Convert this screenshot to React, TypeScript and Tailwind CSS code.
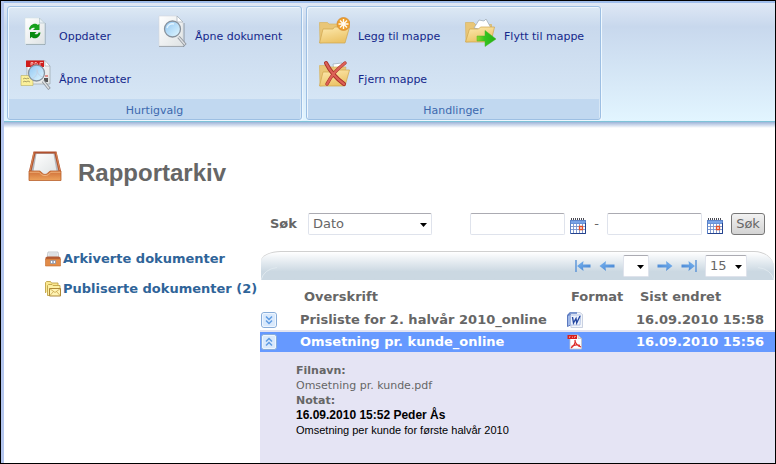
import type { ReactNode } from "react";

function Gradients() {
  return (
    <svg width="0" height="0" className="absolute" aria-hidden="true">
      <defs>
        <linearGradient id="paper" x1="0" y1="0" x2="1" y2="1">
          <stop offset="0" stopColor="#ffffff" />
          <stop offset="1" stopColor="#dfe3e4" />
        </linearGradient>
        <linearGradient id="folder" x1="0" y1="0" x2="0.4" y2="1">
          <stop offset="0" stopColor="#fdeab0" />
          <stop offset="1" stopColor="#ecc468" />
        </linearGradient>
        <linearGradient id="lens" x1="0" y1="0" x2="1" y2="1">
          <stop offset="0" stopColor="#8fc6f2" />
          <stop offset="1" stopColor="#e2f7ff" />
        </linearGradient>
        <linearGradient id="go" x1="0" y1="0" x2="1" y2="0">
          <stop offset="0" stopColor="#8fd42a" />
          <stop offset="0.4" stopColor="#35c51f" />
          <stop offset="1" stopColor="#22b014" />
        </linearGradient>
        <linearGradient id="arrow" x1="0" y1="0" x2="1" y2="1">
          <stop offset="0" stopColor="#7db6f0" />
          <stop offset="1" stopColor="#3f7fd0" />
        </linearGradient>
        <linearGradient id="wood" x1="0" y1="0" x2="0" y2="1">
          <stop offset="0" stopColor="#cf6f38" />
          <stop offset="1" stopColor="#eda35c" />
        </linearGradient>
      </defs>
    </svg>
  );
}

function RefreshIcon() {
  return (
    <svg width="32" height="32" viewBox="0 0 32 32" aria-hidden="true">
      <path d="M7 29.500h19V8" fill="none" stroke="#8f9ea8" />
      <path d="M6 3h14.500l5 5v21H6z" fill="url(#paper)" stroke="#d5e2e4" strokeWidth=".6" />
      <path d="M20.500 3v5h5z" fill="#e8f1f6" stroke="#a8bcc8" strokeWidth=".6" />
      <path d="M10 14.500c.5-5 6-7.500 9-4.500l1.500-1.500V15H14l2-2c-2.500-1-4 .2-4 1.500z" fill="#16a01c" />
      <path d="M21.500 17.500c-.5 5-6 7.500-9 4.500L11 23.500V17h6.500l-2 2c2.500 1 4-.2 4-1.500z" fill="#078a10" />
    </svg>
  );
}

function OpenDocumentIcon() {
  return (
    <svg width="32" height="32" viewBox="0 0 32 32" aria-hidden="true">
      <path d="M4 31.500h25V8" fill="none" stroke="#8f989f" />
      <path d="M4 1h18l6 6v24H4z" fill="url(#paper)" stroke="#d3d7db" strokeWidth=".6" />
      <path d="M22 1v6h6z" fill="#fff" stroke="#9fabb5" strokeWidth=".7" />
      <path d="M23.500 22l7 8" stroke="#8d9299" strokeWidth="3" />
      <path d="M23.500 22l6.500 7.500" stroke="#dcdfe2" strokeWidth="1.500" />
      <circle cx="17.500" cy="14" r="8" fill="url(#lens)" stroke="#87919c" strokeWidth="1.300" />
      <path d="M12 13c1-3.500 4-5 7-4" fill="none" stroke="#e3f4ff" strokeWidth="1.500" />
    </svg>
  );
}

function OpenNotesIcon() {
  return (
    <svg width="32" height="32" viewBox="0 0 32 32" aria-hidden="true">
      <path d="M8 3h18l5 5v18H8z" fill="url(#paper)" stroke="#929aa0" strokeWidth=".6" />
      <path d="M26 2.500v5.500h5z" fill="#fff" stroke="#a0a6ac" strokeWidth=".6" />
      <path d="M7 2.500h18V9H7z" fill="#cf1d1b" />
      <path d="M12 7.500v-3h2v1.500h-2M16 4.500h1.500l1 1.500-1 1.500H16zM24 4.500h-3v3" fill="none" stroke="#f7b8b2" strokeWidth=".9" />
      <path d="M25 20h4v4h-4z" fill="#575757" />
      <path d="M26 18h3" stroke="#d43c31" />
      <path d="M2 17.500h12v10H2z" fill="#fbf09a" stroke="#b9ad61" strokeWidth=".6" />
      <path d="M4 21l2-1 1 1 2-1 1 1M4 24l2-1 1 1 2-1 2 1" fill="none" stroke="#99915a" strokeWidth=".8" />
      <path d="M24 23l6.500 8" stroke="#8d9299" strokeWidth="3" />
      <path d="M24 23l6 7.500" stroke="#dfe2e4" strokeWidth="1.400" />
      <circle cx="17.500" cy="15" r="8" fill="url(#lens)" stroke="#87919c" strokeWidth="1.300" />
      <path d="M18 11c1 4-1 8-5 10M18 11c0 4 2 7 6 8" fill="none" stroke="#c3d2e6" />
    </svg>
  );
}

function FolderShape() {
  return (
    <>
      <path d="M1.500 7.500h8l1.500 1.500h17l-2 15L2 28z" fill="#e9c677" stroke="#d7b563" strokeWidth=".7" />
      <path d="M1.500 28l3.500-14h10l1.500-2h15L27 28z" fill="url(#folder)" stroke="#cfa54c" strokeWidth=".7" />
    </>
  );
}

function AddFolderIcon() {
  return (
    <svg width="32" height="32" viewBox="0 0 32 32" aria-hidden="true">
      <FolderShape />
      <circle cx="25.500" cy="9" r="6.500" fill="#ee9f2b" stroke="#d38a35" strokeWidth=".7" />
      <path d="M25.500 4v10M20.500 9h10M22 5.500l7 7M29 5.500l-7 7" stroke="#fffaf0" strokeWidth="1.400" />
    </svg>
  );
}

function RemoveFolderIcon() {
  return (
    <svg width="32" height="32" viewBox="0 0 32 32" aria-hidden="true">
      <path d="M15 6l9-1 2 8H16z" fill="#fff" stroke="#9aa8b4" strokeWidth=".7" />
      <FolderShape />
      <path d="M8 5c4 8 11 16 18 21" fill="none" stroke="#a72f2a" strokeWidth="4" strokeLinecap="round" />
      <path d="M27 5C19 11 13 18 9 26" fill="none" stroke="#a72f2a" strokeWidth="3.400" strokeLinecap="round" />
      <path d="M8 5c4 8 11 16 18 21M27 5C19 11 13 18 9 26" fill="none" stroke="#dc6156" strokeWidth="2.200" strokeLinecap="round" />
    </svg>
  );
}

function MoveFolderIcon() {
  return (
    <svg width="32" height="32" viewBox="0 0 32 32" aria-hidden="true">
      <path d="M1.500 7.500h8l2 2h16v15L2 27z" fill="#e9c677" stroke="#d7b563" strokeWidth=".7" />
      <path d="M10 13l5-8 5 1 2-2 5 9-3 3z" fill="#fff" stroke="#99a6b0" strokeWidth=".7" />
      <path d="M1.500 27l4-13h9l2-2h14L27 27z" fill="url(#folder)" stroke="#cfa54c" strokeWidth=".7" />
      <path d="M13 21h8v-5.500L32 24l-11 7.500V26h-8z" fill="url(#go)" stroke="#45b42b" strokeWidth=".5" />
    </svg>
  );
}

function TrayIcon() {
  return (
    <svg width="34" height="32" viewBox="0 0 34 32" aria-hidden="true">
      <path d="M5.500 1.500h23L33 21H1z" fill="#b0502e" />
      <path d="M7.500 3.500h19L30.500 21h-27z" fill="#b4b6ba" />
      <path d="M8.500 4h17L29 24H5z" fill="url(#paper)" />
      <path d="M6 2.500L2.200 20.500M28 2.500L31.800 20.500" stroke="#e39a62" strokeWidth=".8" />
      <path d="M1 21h10.500c1.500 0 3 3.500 5.500 3.500s4-3.500 5.500-3.500H33v9.500H1z" fill="url(#wood)" stroke="#b9602c" strokeWidth=".8" />
      <path d="M1.500 22.200h9.500c1.500 1.800 3.200 3.400 6 3.400s4.500-1.600 6-3.400h9.500" fill="none" stroke="#f0b27c" />
    </svg>
  );
}

function ArchiveBoxIcon() {
  return (
    <svg width="16" height="16" viewBox="0 0 16 16" aria-hidden="true" className="shrink-0">
      <path d="M3 1h10l1 6H2z" fill="#eef0f2" stroke="#b9bec3" strokeWidth=".8" />
      <path d="M4 3h8M3.500 5h9" stroke="#c2c8cd" strokeWidth=".8" />
      <path d="M.5 6.500l2-1h11l2 1v2H.5z" fill="#b25a34" />
      <path d="M.5 8h15v7H.5z" fill="#e18b48" stroke="#c36d30" strokeWidth=".6" />
      <path d="M5.500 9.500h5v3h-5z" fill="#fff" stroke="#7b8ba8" strokeWidth=".7" />
      <path d="M7 11h2" stroke="#536b98" />
    </svg>
  );
}

function MailFolderIcon() {
  return (
    <svg width="16" height="16" viewBox="0 0 16 16" aria-hidden="true" className="shrink-0">
      <path d="M.5 12V1.500l1-1h4l1 1.500h6.500v3" fill="#fbe88f" stroke="#c0a348" strokeWidth=".9" />
      <path d="M2.500 14.500v-10l1-1h3.500l1 1h7v10z" fill="#fdf0a4" stroke="#c0a348" strokeWidth=".9" />
      <path d="M4.500 7.500h11v7.500h-11z" fill="#fff4b4" stroke="#a67d28" strokeWidth=".9" />
      <path d="M4.500 7.500l5.500 4 5.500-4M4.500 15l4-4.500M15.500 15l-4-4.500" fill="none" stroke="#c19a40" strokeWidth=".7" />
    </svg>
  );
}

function CalendarIcon() {
  return (
    <svg width="16" height="16" viewBox="0 0 16 16" aria-hidden="true">
      <path d="M0 2h16v14H0z" fill="#5b82c8" />
      <path d="M1 6h14v9H1z" fill="#fff" />
      <path d="M1 3h14v2.500H1z" fill="#78a3e6" />
      <path d="M1 8.500h14M1 11.500h14M3.500 6v9M6.500 6v9M9.500 6v9M12.500 6v9" stroke="#7693cd" strokeWidth=".9" />
      <path d="M1.500 0v2M3.500 0v2M5.500 0v2M7.500 0v2M9.500 0v2M11.500 0v2M13.500 0v2" stroke="#4c4c55" />
      <path d="M9.500 8.500h3v3h-3z" fill="#fff" stroke="#e4512a" strokeWidth="1.300" />
      <path d="M15.500 5v10.500H1" fill="none" stroke="#25428c" />
    </svg>
  );
}

function WordIcon() {
  return (
    <svg width="16" height="16" viewBox="0 0 16 16" aria-hidden="true">
      <path d="M3 .5h10l2.500 2V15.500H4z" fill="#f3f6fb" stroke="#b4bfd4" strokeWidth=".7" />
      <path d="M.5 3.500L3 1h7" fill="none" stroke="#5f80c6" strokeWidth="1.300" />
      <path d="M.5 3.500L3.500 2.500V13L.5 14.500z" fill="#9fb8e8" stroke="#3f60b0" strokeWidth=".8" />
      <path d="M3.500 3h10l-.5 10H3.500z" fill="#eef3fd" stroke="#a3b6de" strokeWidth=".8" />
      <path d="M5.500 5l1 6L9 6.500l.7 4.500L13 4" fill="none" stroke="#2547a0" strokeWidth="1.400" />
    </svg>
  );
}

function PdfIcon() {
  return (
    <svg width="16" height="16" viewBox="0 0 16 16" aria-hidden="true">
      <path d="M3 1h8l3.500 3.500V15H3z" fill="#fff" stroke="#c3c3c8" strokeWidth=".8" />
      <path d="M11 1v3.500h3.500z" fill="#e4e4e8" stroke="#aaa" strokeWidth=".5" />
      <path d="M.5 1H10v4H.5z" fill="#d9201d" />
      <path d="M2.500 4V2.500h1M5.500 4V2.500M7.500 4V2.500H9" fill="none" stroke="#f6b5b0" strokeWidth=".7" />
      <path d="M8 6c.8 3-1.500 6.500-4 8M8 6c-.2 3 2.500 6 6 7M4.500 12.500c2-1.500 5-2.200 8.500-1.200" fill="none" stroke="#dc2c28" strokeWidth="1.200" />
    </svg>
  );
}

function ChevronBox({ up }: { up?: boolean }) {
  return (
    <svg width="16" height="16" viewBox="0 0 16 16" aria-hidden="true">
      <rect x=".5" y=".5" width="15" height="15" rx="2.500" fill="#d9e9fc" stroke="#88acd8" />
      <rect x="1.500" y="1.500" width="13" height="13" rx="1.500" fill="none" stroke="#eef6ff" />
      <path
        d={up ? "M5 7.500l3-3 3 3M5 11.500l3-3 3 3" : "M5 4.500l3 3 3-3M5 8.500l3 3 3-3"}
        fill="none"
        stroke="#5f9be2"
        strokeWidth="1.500"
      />
    </svg>
  );
}

function PagerArrow({ bar, flip }: { bar?: boolean; flip?: boolean }) {
  return (
    <svg width="16" height="12" viewBox="0 0 16 12" aria-hidden="true" className={flip ? "-scale-x-100" : ""}>
      {bar && <path d="M1 0v12" stroke="#4c8bd6" strokeWidth="1.300" />}
      <path d={bar ? "M2 6l6.500-5L8 4.500h7.500v3H8l.5 3.500z" : "M.5 6L7 1l-.5 3.500h9v3h-9L7 11z"} fill="url(#arrow)" />
    </svg>
  );
}

function RibbonButton({ icon, label }: { icon: ReactNode; label: string }) {
  return (
    <button type="button" className="flex h-8 items-center gap-2 whitespace-nowrap text-left text-[#15288b]">
      {icon}
      <span className="pt-3">{label}</span>
    </button>
  );
}

function RibbonPanel({ title, children }: { title: string; children: ReactNode }) {
  return (
    <section className="flex w-[295px] flex-col rounded-[3px] border border-[#9dbfe3] bg-linear-to-b from-[#dde9f5] from-0% via-[#c9d9ed] via-18% to-[#d9e9f7] shadow-[inset_1px_1px_0_#eef6fd,1px_1px_0_#eef8ff]">
      <div className="flex flex-1 flex-col px-[11px] pt-2">{children}</div>
      <h2 className="mx-px h-5 bg-[#c1d8f0] text-center leading-6 text-[#3c68ae]">{title}</h2>
    </section>
  );
}

type SelectProps = { id?: string; label?: string; options: string[]; className: string };

function Select({ id, label, options, className }: SelectProps) {
  return (
    <span className={`relative inline-block ${className}`}>
      <select
        id={id}
        aria-label={label}
        className="block h-[22px] w-full appearance-none rounded-[2px] border border-[#dfe3ec] border-t-[#ababb2] bg-white pl-1 text-[13px] leading-5 text-[#666]"
      >
        {options.map((o) => (
          <option key={o}>{o}</option>
        ))}
      </select>
      <svg width="7" height="4" viewBox="0 0 7 4" className="pointer-events-none absolute right-[5px] top-[10px]" aria-hidden="true">
        <path d="M0 0h7L3.500 4z" fill="#000" />
      </svg>
    </span>
  );
}

function DateField({ label }: { label: string }) {
  return (
    <span className="flex items-center gap-[5px]">
      <input
        type="text"
        aria-label={label}
        className="h-[22px] w-[95px] rounded-[2px] border border-[#dfe3ec] border-t-[#ababb2] bg-white px-1 text-[13px]"
      />
      <button type="button" aria-label={`${label} kalender`} className="pt-1">
        <CalendarIcon />
      </button>
    </span>
  );
}

function PagerButton({ label, bar, flip }: { label: string; bar?: boolean; flip?: boolean }) {
  return (
    <button type="button" aria-label={label}>
      <PagerArrow bar={bar} flip={flip} />
    </button>
  );
}

function SideLink({ icon, children }: { icon: ReactNode; children: ReactNode }) {
  return (
    <a href="#" className="flex h-[30px] items-center gap-[2px] whitespace-nowrap text-[13px] font-bold text-[#2f6499]">
      {icon}
      {children}
    </a>
  );
}

export default function App() {
  return (
    <div className="flex min-h-screen flex-col border border-black bg-white font-['DejaVu_Sans',Verdana,sans-serif] text-[11px] text-[#666]">
      <Gradients />
      <div className="flex flex-1 flex-col border-l-[3px] border-[#b4c6ee]">
        <header className="border-b border-[#7fc3d8] border-t-2 border-t-[#9fbdeb] bg-linear-to-b from-[#dfe8f5] via-[#c8d8ed] via-20% to-[#e2f5ff]">
          <div className="flex h-[118px] gap-1 px-[3px] pt-[3px] pb-px">
            <RibbonPanel title="Hurtigvalg">
              <div className="grid grid-cols-[136px_1fr] gap-y-[11px]">
                <RibbonButton icon={<RefreshIcon />} label="Oppdater" />
                <RibbonButton icon={<OpenDocumentIcon />} label="Åpne dokument" />
                <RibbonButton icon={<OpenNotesIcon />} label="Åpne notater" />
              </div>
            </RibbonPanel>
            <RibbonPanel title="Handlinger">
              <div className="grid grid-cols-[146px_1fr] gap-y-[11px]">
                <RibbonButton icon={<AddFolderIcon />} label="Legg til mappe" />
                <RibbonButton icon={<MoveFolderIcon />} label="Flytt til mappe" />
                <RibbonButton icon={<RemoveFolderIcon />} label="Fjern mappe" />
              </div>
            </RibbonPanel>
          </div>
        </header>
        <div className="h-[6px] bg-linear-to-b from-[#9db4d8] to-white" />

        <div className="flex items-start gap-4 pl-6 pt-[22px]">
          <TrayIcon />
          <h1 className="pt-[7px] font-['Liberation_Sans',Arial,sans-serif] text-[24px] font-bold leading-8">Rapportarkiv</h1>
        </div>

        <div className="flex flex-1 pt-1">
          <nav className="w-64 shrink-0 pl-[41px] pt-[51px]">
            <SideLink icon={<ArchiveBoxIcon />}>Arkiverte dokumenter</SideLink>
            <SideLink icon={<MailFolderIcon />}>Publiserte dokumenter (2)</SideLink>
          </nav>

          <main className="flex min-w-0 flex-1 flex-col pt-5">
            <form className="flex items-center pl-[10px] text-[13px]" onSubmit={(e) => e.preventDefault()}>
              <label htmlFor="field" className="w-[38px] font-bold">
                Søk
              </label>
              <Select id="field" options={["Dato"]} className="w-[124px]" />
              <div className="ml-auto mr-[10px] flex items-center gap-2">
                <DateField label="Fra dato" />
                <span>-</span>
                <DateField label="Til dato" />
                <button
                  type="submit"
                  className="h-[22px] w-[34px] rounded-[3px] border border-[#777] bg-linear-to-b from-[#f2f2f2] to-[#d3d3d3] text-[13px] leading-5"
                >
                  Søk
                </button>
              </div>
            </form>

            <div className="relative mx-px mt-4 flex h-[29px] items-center justify-end gap-2 overflow-hidden rounded-tl-[20px_10px] rounded-tr-[20px_16px] border-t border-[#d0d0d0] bg-linear-to-b from-white to-[#cbd8e2] to-70% pr-[27px]">
              <svg width="16" height="13" viewBox="0 0 16 13" className="absolute bottom-0 left-0" aria-hidden="true">
                <path d="M0 13Q3 2 16 .5" fill="none" stroke="#dfe8ee" />
              </svg>
              <svg width="16" height="13" viewBox="0 0 16 13" className="absolute bottom-0 right-0" aria-hidden="true">
                <path d="M16 13Q13 2 0 .5" fill="none" stroke="#dfe8ee" />
              </svg>
              <PagerButton label="Første" bar />
              <PagerButton label="Forrige" />
              <Select label="Side" options={[""]} className="w-[26px]" />
              <PagerButton label="Neste" flip />
              <PagerButton label="Siste" bar flip />
              <Select label="Antall per side" options={["15"]} className="w-[42px]" />
            </div>

            <table className="w-full table-fixed border-collapse text-left text-[13px]">
              <colgroup>
                <col className="w-10" />
                <col />
                <col className="w-[69px]" />
                <col className="w-[139px]" />
              </colgroup>
              <thead>
                <tr className="h-[29px]">
                  <th />
                  <th className="pl-1 pt-1">Overskrift</th>
                  <th className="pl-1 pt-1">Format</th>
                  <th className="pl-1 pt-1">Sist endret</th>
                </tr>
              </thead>
              <tbody className="font-bold">
                <tr className="h-[22px] border-b-2 border-[#e4e4f0]">
                  <td className="p-0 pl-px">
                    <button type="button" aria-label="Vis detaljer" className="block">
                      <ChevronBox />
                    </button>
                  </td>
                  <td className="whitespace-nowrap p-0">Prisliste for 2. halvår 2010_online</td>
                  <td className="p-0">
                    <WordIcon />
                  </td>
                  <td className="whitespace-nowrap p-0">16.09.2010 15:58</td>
                </tr>
                <tr className="h-5 bg-[#6699ff] text-white">
                  <td className="p-0 pl-px">
                    <button type="button" aria-label="Skjul detaljer" className="block">
                      <ChevronBox up />
                    </button>
                  </td>
                  <td className="whitespace-nowrap p-0">Omsetning pr. kunde_online</td>
                  <td className="p-0">
                    <PdfIcon />
                  </td>
                  <td className="whitespace-nowrap p-0">16.09.2010 15:56</td>
                </tr>
              </tbody>
            </table>

            <div className="flex-1 bg-[#e5e4f4] pb-4 pl-9 pt-[11px] text-[11px] leading-[15px]">
              <p className="font-bold">Filnavn:</p>
              <p>Omsetning pr. kunde.pdf</p>
              <p className="font-bold">Notat:</p>
              <div className="font-['Liberation_Sans',Arial,sans-serif] text-black">
                <p className="text-[12px] font-bold">16.09.2010 15:52 Peder Ås</p>
                <p>Omsetning per kunde for første halvår 2010</p>
              </div>
            </div>
          </main>
        </div>
      </div>
    </div>
  );
}
